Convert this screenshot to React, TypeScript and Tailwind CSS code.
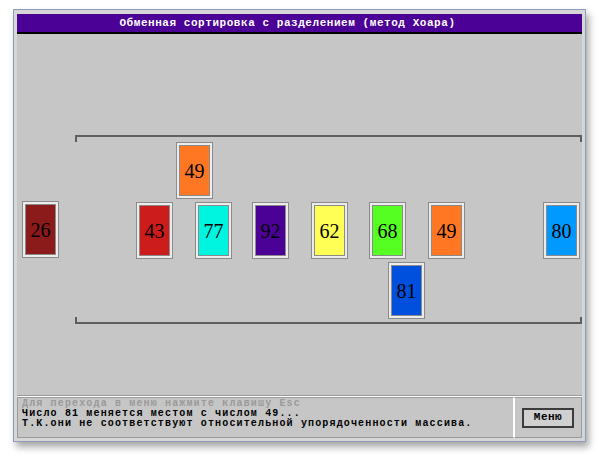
const cards = [
  { v: 26, x: 5, y: 167, c: "bg-[#8b1a1a]" },
  { v: 43, x: 119, y: 168, c: "bg-[#cc1c1c]" },
  { v: 49, x: 159, y: 108, c: "bg-[#ff7722]" },
  { v: 77, x: 178, y: 168, c: "bg-[#00f5e0]" },
  { v: 92, x: 235, y: 168, c: "bg-[#4b0096]" },
  { v: 62, x: 294, y: 168, c: "bg-[#ffff55]" },
  { v: 68, x: 352, y: 168, c: "bg-[#55ff22]" },
  { v: 49, x: 411, y: 168, c: "bg-[#ff7722]" },
  { v: 80, x: 526, y: 168, c: "bg-[#0099ff]" },
  { v: 81, x: 371, y: 228, c: "bg-[#0050dd]" },
];

function Card({ v, x, y, c }: { v: number; x: number; y: number; c: string }) {
  return (
    <div
      className="absolute w-[37px] h-[57px] border border-[#8a8a8a] bg-[#ececec] p-[2px]"
      style={{ left: x, top: y }}
    >
      <div
        className={`flex h-full w-full items-center justify-center border border-[#8a8a8a] ${c} font-['Liberation_Serif',serif] text-[20px] text-black`}
      >
        {v}
      </div>
    </div>
  );
}

export default function App() {
  return (
    <div className="h-[456px] w-[600px] bg-white pl-[13px] pt-[9px]">
      <div className="flex h-[433px] w-[573px] flex-col border border-[#8d9bbd] bg-[#d6d6d6] px-[3px] pt-[4px] pb-[3px] shadow-[3px_5px_7px_rgba(0,0,0,0.35)]">
        <div className="flex h-[20px] shrink-0 items-center justify-center border-b-2 border-black bg-[#4b0096] pr-[24px] font-['Liberation_Mono',monospace] text-[11px] font-bold tracking-[0.55px] text-white">
          Обменная сортировка с разделением (метод Хоара)
        </div>
        <div className="relative h-[362px] shrink-0 border-b border-[#9a9a9a] bg-[#c6c6c6]">
          <div className="absolute left-[58px] top-[101px] h-[7px] w-[507px] border-l-2 border-r-2 border-t-2 border-[#5e5e5e]" />
          <div className="absolute left-[58px] top-[283px] h-[7px] w-[507px] border-b-2 border-l-2 border-r-2 border-[#5e5e5e]" />
          {cards.map((k, i) => (
            <Card key={i} {...k} />
          ))}
        </div>
        <div className="flex flex-1 border-t border-white bg-[#c6c6c6]">
          <div className="flex-1 overflow-hidden border border-[#9a9a9a] border-r-white pl-[4px] pt-[1px] font-['Liberation_Mono',monospace] text-[10px] font-bold leading-[10px] tracking-[1.15px]">
            <div className="text-[#9a9a9a]">Для перехода в меню нажмите клавишу Esc</div>
            <div className="text-black">Число 81 меняется местом с числом 49...</div>
            <div className="text-black">Т.К.они не соответствуют относительной упорядоченности массива.</div>
          </div>
          <div className="flex w-[68px] items-center justify-center border border-[#9a9a9a] border-l-white">
            <div className="flex h-[20px] w-[52px] items-center justify-center border-2 border-[#3c3c3c] bg-[#d0d0d0] font-['Liberation_Mono',monospace] text-[11px] font-bold tracking-[0.5px] text-black">
              Меню
            </div>
          </div>
        </div>
      </div>
    </div>
  );
}
